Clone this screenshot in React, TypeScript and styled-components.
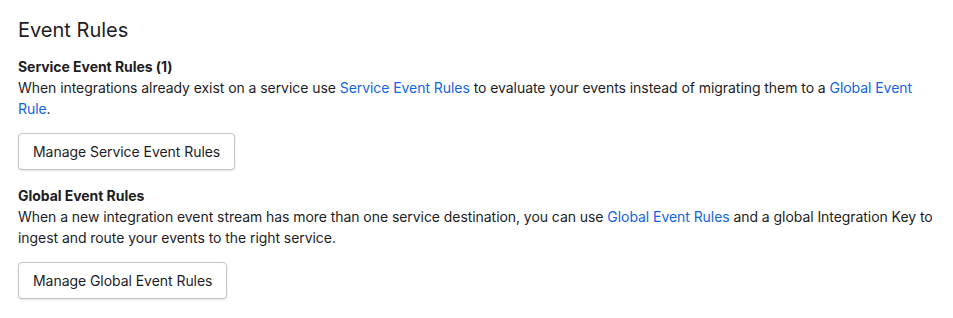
import React from 'react';
import styled, { createGlobalStyle } from 'styled-components';

const GlobalStyle = createGlobalStyle`
  body {
    margin: 0;
    background: #ffffff;
    font-family: Inter, "Noto Sans", sans-serif;
    color: #1d1d1f;
  }
`;

const Page = styled.div`
  padding: 16px 18px;
`;

const Title = styled.h1`
  margin: 0 0 12px;
  font-size: 20px;
  line-height: 28px;
  font-weight: 400;
  color: #1d1d1f;
`;

const Section = styled.section`
  margin-bottom: 15px;
`;

const SectionTitle = styled.h3`
  margin: 0;
  font-size: 14px;
  line-height: 21px;
  font-weight: 700;
  letter-spacing: -0.05px;
`;

const Description = styled.p`
  margin: 0;
  font-size: 14px;
  line-height: 21px;
  letter-spacing: -0.06px;
`;

const Link = styled.a`
  color: #1464e3;
  text-decoration: none;
`;

const Button = styled.button`
  margin-top: 14px;
  height: 37px;
  padding: 0 14px;
  font-family: inherit;
  font-size: 14px;
  letter-spacing: -0.05px;
  color: #1d1d1f;
  background: #ffffff;
  border: 1px solid #c4c4c4;
  border-radius: 4px;
  box-shadow: 0 1px 2px rgba(0, 0, 0, 0.12);
  cursor: pointer;
`;

export default function App() {
  return (
    <Page>
      <GlobalStyle />
      <Title>Event Rules</Title>
      <Section>
        <SectionTitle>Service Event Rules (1)</SectionTitle>
        <Description>
          When integrations already exist on a service use <Link href="#">Service Event Rules</Link> to
          evaluate your events instead of migrating them to a <Link href="#">Global Event Rule</Link>.
        </Description>
        <Button>Manage Service Event Rules</Button>
      </Section>
      <Section>
        <SectionTitle>Global Event Rules</SectionTitle>
        <Description>
          When a new integration event stream has more than one service destination, you can
          use <Link href="#">Global Event Rules</Link> and a global Integration Key to ingest and
          route your events to the right service.
        </Description>
        <Button>Manage Global Event Rules</Button>
      </Section>
    </Page>
  );
}
